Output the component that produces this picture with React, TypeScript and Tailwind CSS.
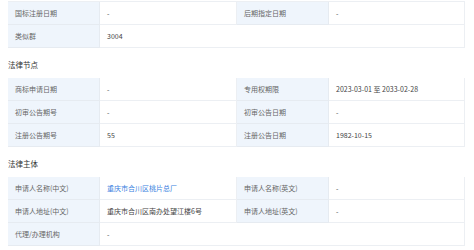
type Cell = { label: string; value: string; link?: boolean }
type Row = Cell[]

const basic: Row[] = [
  [
    { label: '国标注册日期', value: '-' },
    { label: '后期指定日期', value: '-' },
  ],
  [{ label: '类似群', value: '3004' }],
]

const nodes: Row[] = [
  [
    { label: '商标申请日期', value: '-' },
    { label: '专用权期限', value: '2023-03-01 至 2033-02-28' },
  ],
  [
    { label: '初审公告期号', value: '-' },
    { label: '初审公告日期', value: '-' },
  ],
  [
    { label: '注册公告期号', value: '55' },
    { label: '注册公告日期', value: '1982-10-15' },
  ],
]

const subjects: Row[] = [
  [
    { label: '申请人名称(中文)', value: '重庆市合川区桃片总厂', link: true },
    { label: '申请人名称(英文)', value: '-' },
  ],
  [
    { label: '申请人地址(中文)', value: '重庆市合川区南办处望江楼6号' },
    { label: '申请人地址(英文)', value: '-' },
  ],
  [{ label: '代理/办理机构', value: '-' }],
]

function InfoTable({ rows }: { rows: Row[] }) {
  return (
    <div className="grid grid-cols-[92px_137px_92px_136px] border-r border-[#eceff3]">
      {rows.map((row, i) =>
        row.map((cell, j) => (
          <div key={`${i}-${j}`} className="contents">
            <div className="h-[23px] flex items-center pl-[7px] bg-[#eff5fc] text-[#666] border-b border-r border-[#e6ebf1]">
              {cell.label}
            </div>
            <div
              className={`h-[23px] flex items-center pl-[7px] border-b border-[#eceff3] ${
                row.length === 1 ? 'col-span-3' : j === 0 ? 'border-r' : ''
              } ${cell.link ? 'text-[#3b7fe0]' : 'text-[#444]'}`}
            >
              {cell.value}
            </div>
          </div>
        ))
      )}
    </div>
  )
}

function SectionTitle({ children }: { children: string }) {
  return (
    <div className="h-[30px] flex items-center pt-[4px] text-[7.5px] text-[#333]">
      {children}
    </div>
  )
}

export default function App() {
  return (
    <div
      className="w-[474px] h-[250px] overflow-hidden bg-white pl-[8px] pr-[9px] text-[7px]"
      style={{ fontFamily: '"Noto Sans CJK SC", "Noto Sans", sans-serif' }}
    >
      <div className="h-[2px] border-b border-[#eceff3]" />
      <InfoTable rows={basic} />
      <SectionTitle>法律节点</SectionTitle>
      <InfoTable rows={nodes} />
      <SectionTitle>法律主体</SectionTitle>
      <InfoTable rows={subjects} />
    </div>
  )
}
